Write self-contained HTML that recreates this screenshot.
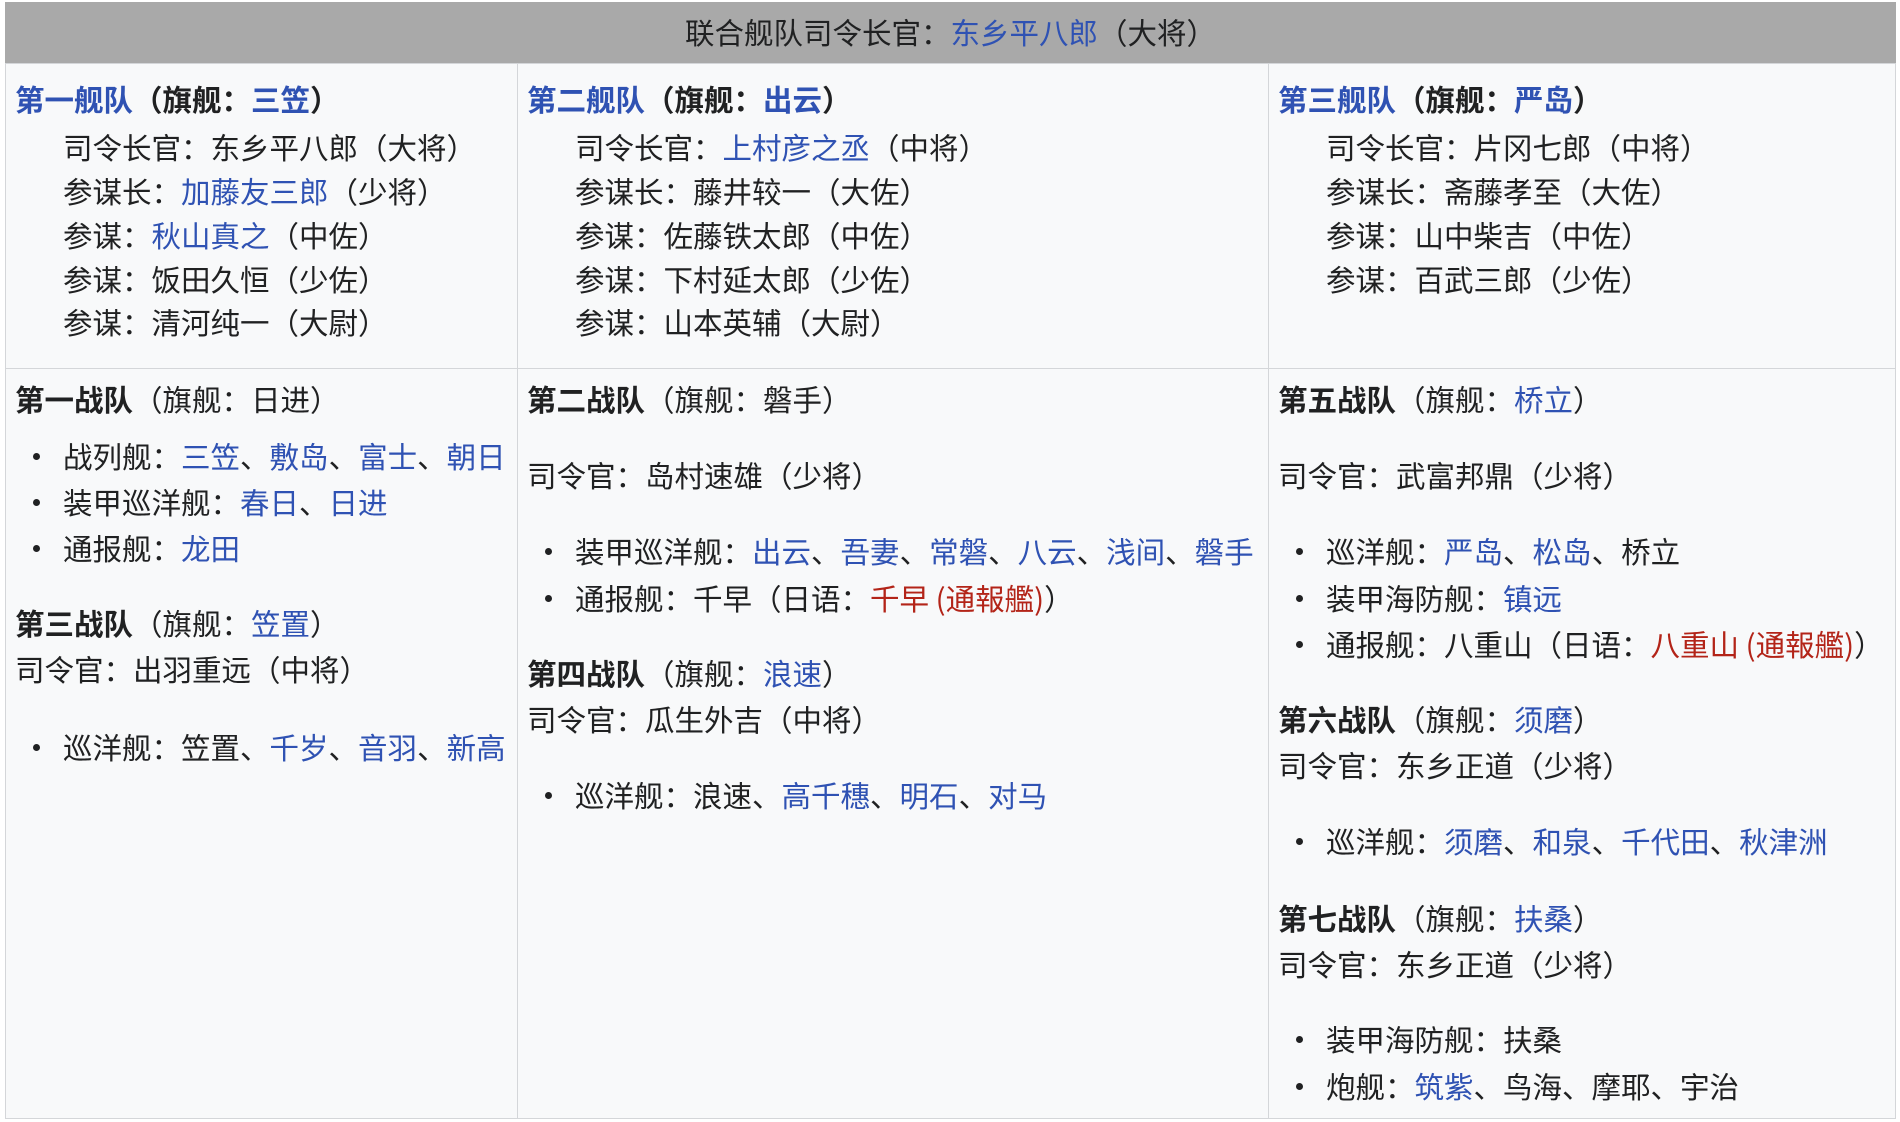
<!DOCTYPE html>
<html><head><meta charset="utf-8"><style>
*{margin:0;padding:0;box-sizing:border-box}
body{width:1900px;height:1122px;background:#fff;position:relative;overflow:hidden;font-family:"Noto Sans CJK SC","Liberation Sans",sans-serif;font-weight:400;font-size:29.5px;color:#202122}
.hd{position:absolute;left:5px;top:2px;width:1891px;height:61px;background:#a9a9a9;text-align:center;line-height:60px}
.c{position:absolute;background:#f8f9fa;border:1px solid #d4d6d9}
.l{position:absolute;white-space:nowrap;line-height:44px;height:44px}
a{color:#2f52b3;text-decoration:none}
.r{color:#b32418}
b{font-weight:bold}
.bu{position:absolute;width:7px;height:7px;border-radius:50%;background:#202122}
</style></head><body>
<div class="hd">联合舰队司令长官：<a>东乡平八郎</a>（大将）</div>
<div class="c" style="left:5px;top:63px;width:513px;height:306px"></div>
<div class="c" style="left:517px;top:63px;width:752px;height:306px"></div>
<div class="c" style="left:1268px;top:63px;width:628px;height:306px"></div>
<div class="c" style="left:5px;top:368px;width:513px;height:751px"></div>
<div class="c" style="left:517px;top:368px;width:752px;height:751px"></div>
<div class="c" style="left:1268px;top:368px;width:628px;height:751px"></div>

<div class="l" style="left:15px;top:77px"><b><a>第一舰队</a>（旗舰：<a>三笠</a>）</b></div>
<div class="l" style="left:63px;top:125px">司令长官：东乡平八郎（大将）</div>
<div class="l" style="left:63px;top:169px">参谋长：<a>加藤友三郎</a>（少将）</div>
<div class="l" style="left:63px;top:213px">参谋：<a>秋山真之</a>（中佐）</div>
<div class="l" style="left:63px;top:257px">参谋：饭田久恒（少佐）</div>
<div class="l" style="left:63px;top:300px">参谋：清河纯一（大尉）</div>
<div class="l" style="left:527px;top:77px"><b><a>第二舰队</a>（旗舰：<a>出云</a>）</b></div>
<div class="l" style="left:575px;top:125px">司令长官：<a>上村彦之丞</a>（中将）</div>
<div class="l" style="left:575px;top:169px">参谋长：藤井较一（大佐）</div>
<div class="l" style="left:575px;top:213px">参谋：佐藤铁太郎（中佐）</div>
<div class="l" style="left:575px;top:257px">参谋：下村延太郎（少佐）</div>
<div class="l" style="left:575px;top:300px">参谋：山本英辅（大尉）</div>
<div class="l" style="left:1278px;top:77px"><b><a>第三舰队</a>（旗舰：<a>严岛</a>）</b></div>
<div class="l" style="left:1326px;top:125px">司令长官：片冈七郎（中将）</div>
<div class="l" style="left:1326px;top:169px">参谋长：斋藤孝至（大佐）</div>
<div class="l" style="left:1326px;top:213px">参谋：山中柴吉（中佐）</div>
<div class="l" style="left:1326px;top:257px">参谋：百武三郎（少佐）</div>

<div class="l" style="left:15px;top:377px"><b>第一战队</b>（旗舰：日进）</div>
<div class="bu" style="left:33px;top:453px"></div><div class="l" style="left:63px;top:434px">战列舰：<a>三笠</a>、<a>敷岛</a>、<a>富士</a>、<a>朝日</a></div>
<div class="bu" style="left:33px;top:499px"></div><div class="l" style="left:63px;top:480px">装甲巡洋舰：<a>春日</a>、<a>日进</a></div>
<div class="bu" style="left:33px;top:545px"></div><div class="l" style="left:63px;top:526px">通报舰：<a>龙田</a></div>
<div class="l" style="left:15px;top:601px"><b>第三战队</b>（旗舰：<a>笠置</a>）</div>
<div class="l" style="left:15px;top:647px">司令官：出羽重远（中将）</div>
<div class="bu" style="left:33px;top:744px"></div><div class="l" style="left:63px;top:725px">巡洋舰：笠置、<a>千岁</a>、<a>音羽</a>、<a>新高</a></div>

<div class="l" style="left:527px;top:377px"><b>第二战队</b>（旗舰：磐手）</div>
<div class="l" style="left:527px;top:453px">司令官：岛村速雄（少将）</div>
<div class="bu" style="left:545px;top:548px"></div><div class="l" style="left:575px;top:529px">装甲巡洋舰：<a>出云</a>、<a>吾妻</a>、<a>常磐</a>、<a>八云</a>、<a>浅间</a>、<a>磐手</a></div>
<div class="bu" style="left:545px;top:595px"></div><div class="l" style="left:575px;top:576px">通报舰：千早（日语：<a class="r">千早 (通報艦)</a>）</div>
<div class="l" style="left:527px;top:651px"><b>第四战队</b>（旗舰：<a>浪速</a>）</div>
<div class="l" style="left:527px;top:697px">司令官：瓜生外吉（中将）</div>
<div class="bu" style="left:545px;top:792px"></div><div class="l" style="left:575px;top:773px">巡洋舰：浪速、<a>高千穗</a>、<a>明石</a>、<a>对马</a></div>

<div class="l" style="left:1278px;top:377px"><b>第五战队</b>（旗舰：<a>桥立</a>）</div>
<div class="l" style="left:1278px;top:453px">司令官：武富邦鼎（少将）</div>
<div class="bu" style="left:1296px;top:548px"></div><div class="l" style="left:1326px;top:529px">巡洋舰：<a>严岛</a>、<a>松岛</a>、桥立</div>
<div class="bu" style="left:1296px;top:595px"></div><div class="l" style="left:1326px;top:576px">装甲海防舰：<a>镇远</a></div>
<div class="bu" style="left:1296px;top:641px"></div><div class="l" style="left:1326px;top:622px">通报舰：八重山（日语：<a class="r">八重山 (通報艦)</a>）</div>
<div class="l" style="left:1278px;top:697px"><b>第六战队</b>（旗舰：<a>须磨</a>）</div>
<div class="l" style="left:1278px;top:743px">司令官：东乡正道（少将）</div>
<div class="bu" style="left:1296px;top:838px"></div><div class="l" style="left:1326px;top:819px">巡洋舰：<a>须磨</a>、<a>和泉</a>、<a>千代田</a>、<a>秋津洲</a></div>
<div class="l" style="left:1278px;top:896px"><b>第七战队</b>（旗舰：<a>扶桑</a>）</div>
<div class="l" style="left:1278px;top:942px">司令官：东乡正道（少将）</div>
<div class="bu" style="left:1296px;top:1036px"></div><div class="l" style="left:1326px;top:1017px">装甲海防舰：扶桑</div>
<div class="bu" style="left:1296px;top:1083px"></div><div class="l" style="left:1326px;top:1064px">炮舰：<a>筑紫</a>、鸟海、摩耶、宇治</div>
</body></html>
